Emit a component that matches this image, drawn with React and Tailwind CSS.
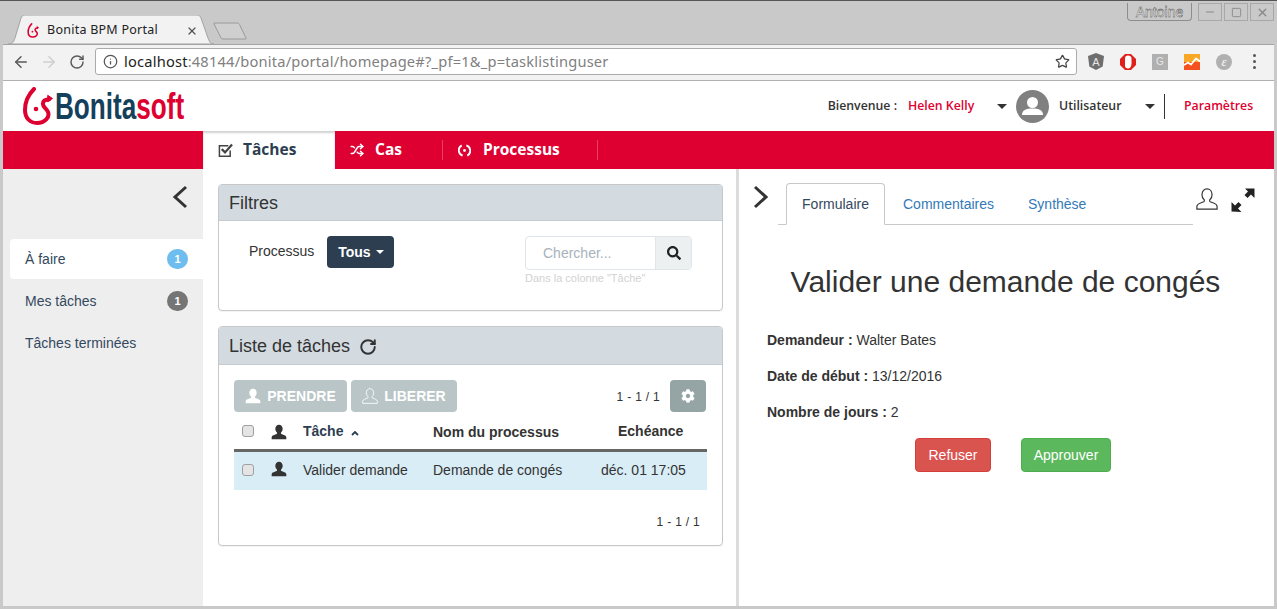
import { RotateCw, Shuffle, ArrowLeft, ArrowRight, Info, Star, X, Minus, Square } from 'lucide-react'
import { FaCog, FaSearch } from 'react-icons/fa'

const SANS = 'font-["Liberation_Sans",Arial,sans-serif]'

const PERSON = 'M12 1C8.600 1 6.500 3.800 6.500 7.300c0 2.400 1 4.400 2.400 5.500.3.300.3 1.800-.4 2.200C6 16.200 1 17 1 20v3h22v-3c0-3-5-3.800-7.500-5-.7-.4-.7-1.900-.4-2.200 1.400-1.100 2.400-3.100 2.400-5.500C17.500 3.800 15.400 1 12 1z'

function PersonIcon({ className, outline }) {
  return (
    <svg viewBox="0 0 24 24" className={className} fill={outline ? 'none' : 'currentColor'} stroke={outline ? 'currentColor' : 'none'} strokeWidth="1.300">
      <path d={PERSON} />
    </svg>
  )
}

function LogoMark({ className }) {
  return (
    <svg viewBox="7 4 31 38" className={className} fill="none" stroke="#dd0031" strokeLinecap="round">
      <path d="M19 6C13 12 10 20 10 27c0 8 5 13 12 13 8 0 13-6 11-11-1.500-4-6-5-5-9 .5-2.500 3-3.500 6-3.500" strokeWidth="4" />
      <path d="M33 12.500l4.500 3-4.500 3z" fill="#dd0031" strokeWidth="1" />
      <circle cx="21" cy="26" r="2.300" fill="#dd0031" stroke="none" />
    </svg>
  )
}

function Logo() {
  return (
    <div className="flex items-center w-[170px]">
      <LogoMark className="w-[31px] h-[38px] shrink-0" />
      <div className="ml-[2px] text-[37px] leading-none font-bold font-['Liberation_Sans',sans-serif] scale-x-[0.706] origin-left whitespace-nowrap">
        <span className="text-[#14405c]">Bonita</span>
        <span className="text-[#dd0031]">soft</span>
      </div>
    </div>
  )
}

function Titlebar() {
  return (
    <div className="h-[43px] flex shrink-0 relative">
      <div className="relative w-[206px] h-[29px] mt-[14px] ml-[8px]">
        <svg viewBox="0 0 206 29" className="absolute inset-0 w-full h-full">
          <path d="M0 29c4 0 5-1 7-6L13 3c1-2 2-3 4-3h172c2 0 3 1 4 3l7 20c2 5 3 6 6 6z" fill="#f2f2f2" stroke="#a3a3a3" />
        </svg>
        <div className="relative flex items-center h-full pl-[19px] pr-[16px] pt-[2px]">
          <LogoMark className="w-[12px] h-[15px]" />
          <span className="ml-[8px] text-[12.500px] tracking-[0.25px] text-[#222] font-['Noto_Sans',sans-serif]">Bonita BPM Portal</span>
          <X className="ml-auto w-[12px] h-[12px] text-[#555]" strokeWidth={2.500} />
        </div>
      </div>
      <svg viewBox="0 0 36 18" className="w-[36px] h-[18px] mt-[21px] -ml-[1px]">
        <path d="M1 1h23c1 0 2 .5 2.500 1.500L33 16c.3.800 0 1-1 1H10c-1 0-1.500-.3-2-1L1 2c-.3-.6 0-1 0-1z" fill="#cfcfcf" stroke="#9a9a9a" />
      </svg>
      <div className="ml-auto flex gap-[2px] pt-[2px] pr-[3px] text-[#666]">
        <div className="w-[65px] h-[18px] mr-[4px] pt-[2px] border border-t-0 border-[#8d8d8d] rounded-b-[4px] flex items-center justify-center text-[14px] text-[#eeeeee] [-webkit-text-stroke:0.35px_#333] font-['Liberation_Sans',sans-serif]">Antoine</div>
        <div className="w-[24px] h-[18px] border border-[#a8a8a8] flex items-center justify-center"><Minus className="w-[12px] h-[12px] text-[#8a8a8a]" strokeWidth={2} /></div>
        <div className="w-[24px] h-[18px] border border-[#a8a8a8] flex items-center justify-center"><Square className="w-[11px] h-[11px] text-[#8a8a8a]" strokeWidth={2} /></div>
        <div className="w-[24px] h-[18px] border border-[#a8a8a8] flex items-center justify-center"><X className="w-[13px] h-[13px] text-[#8a8a8a]" strokeWidth={2.500} /></div>
      </div>
    </div>
  )
}

function Toolbar() {
  return (
    <div className="h-[37px] shrink-0 mx-[3px] bg-[#f2f2f2] border-t border-[#a3a3a3] border-b border-b-[#b0b0b0] flex items-center pb-[2px]">
      <ArrowLeft className="ml-[9px] w-[18px] h-[18px] text-[#5a5a5a]" strokeWidth={2} />
      <ArrowRight className="ml-[10px] w-[18px] h-[18px] text-[#cfcfcf]" strokeWidth={2} />
      <RotateCw className="ml-[11px] w-[16px] h-[16px] text-[#5a5a5a]" strokeWidth={2.200} />
      <div className="ml-[10px] w-[982px] h-[27px] bg-white border border-[#ababab] rounded-[3px] flex items-center pl-[7px] pr-[6px]">
        <Info className="w-[15px] h-[15px] text-[#555]" strokeWidth={2} />
        <span className="ml-[6px] text-[14.650px] tracking-[0.2px] font-['Noto_Sans',sans-serif] text-[#222]">localhost<span className="text-[#808080]">:48144/bonita/portal/homepage#?_pf=1&amp;_p=tasklistinguser</span></span>
        <Star className="ml-auto w-[15px] h-[15px] text-[#444]" strokeWidth={2} />
      </div>
      <svg viewBox="0 0 16 17" className="ml-[11px] w-[16px] h-[17px]">
        <path d="M8 0l8 3-1.300 10.500L8 17l-6.700-3.500L0 3z" fill="#6e6e6e" />
        <text x="8" y="12.500" textAnchor="middle" fontSize="11" fill="#e8e8e8" fontFamily="Liberation Sans">A</text>
      </svg>
      <svg viewBox="0 0 16 16" className="ml-[16px] w-[16px] h-[16px]">
        <path d="M5 0h6l5 5v6l-5 5H5l-5-5V5z" fill="#e0201b" />
        <path d="M5 4.500c0-2 1-3 3-3s3.500 1 3.500 3v5c0 3-1.500 5-3.500 5s-3-1-3-3z" fill="#fff" />
      </svg>
      <div className="ml-[16px] w-[16px] h-[16px] bg-[#b0b0b0] flex items-center justify-center text-[10px] text-[#e8e8e8] font-['Liberation_Sans',sans-serif]">G</div>
      <svg viewBox="0 0 16 16" className="ml-[16px] w-[16px] h-[16px]">
        <rect width="16" height="8" fill="#f9a825" />
        <rect y="8" width="16" height="8" fill="#f4511e" />
        <path d="M0 11l4-2.500 3 2 5-6 4 3" fill="none" stroke="#fff" strokeWidth="1.800" />
      </svg>
      <div className="ml-[16px] w-[16px] h-[16px] rounded-full bg-[#b0b0b0] flex items-center justify-center text-[13px] italic text-white font-['Liberation_Serif',serif]">&#949;</div>
      <div className="ml-[21px] flex flex-col gap-[3px]">
        <span className="w-[3px] h-[3px] rounded-full bg-[#555]" />
        <span className="w-[3px] h-[3px] rounded-full bg-[#555]" />
        <span className="w-[3px] h-[3px] rounded-full bg-[#555]" />
      </div>
    </div>
  )
}

function Caret({ className }) {
  return <span className={`w-0 h-0 border-x-[5px] border-x-transparent border-t-[5px] border-t-[#333] ${className}`} />
}

function AppHeader() {
  return (
    <div className="h-[50px] shrink-0 bg-white flex items-center pl-[19px] pr-[21px] font-['Open_Sans',sans-serif] text-[12.300px] font-semibold">
      <Logo />
      <div className="ml-auto flex items-center">
        <span className="text-[#333]">Bienvenue :</span>
        <span className="ml-[11px] w-[68px] whitespace-nowrap text-[#dd0031]">Helen Kelly</span>
        <Caret className="ml-[21px]" />
        <div className="ml-[9px] w-[33px] h-[33px] rounded-full bg-[#808080] flex items-center justify-center overflow-hidden">
          <svg viewBox="0 0 33 33" className="w-[33px] h-[33px]">
            <circle cx="16.500" cy="12.500" r="5.500" fill="#fff" />
            <path d="M6 25c0-5 4-6.500 10.500-6.500S27 20 27 25z" fill="#fff" />
          </svg>
        </div>
        <span className="ml-[10px] w-[65px] whitespace-nowrap text-[#333]">Utilisateur</span>
        <Caret className="ml-[21px]" />
        <span className="ml-[9px] w-px h-[25px] bg-[#333]" />
        <span className="ml-[19px] w-[69px] whitespace-nowrap text-[#dd0031]">Paramètres</span>
      </div>
    </div>
  )
}

function NavBar() {
  return (
    <div className="h-[38px] shrink-0 bg-[#dd0031] flex pl-[200px] text-[15.500px] font-bold font-['Open_Sans',sans-serif]">
      <div className="w-[132px] bg-white shadow-[inset_0_2px_2px_rgba(0,0,0,0.18)] flex items-center pl-[15px] text-[#2c3e50]">
        <svg viewBox="0 0 16 16" className="w-[15px] h-[15px]" fill="none" stroke="#444">
          <path d="M13 8v6H1.500V3H11" strokeWidth="1.600" />
          <path d="M4 6.500l3.500 3.500L15 1.500" strokeWidth="2.400" />
        </svg>
        <span className="ml-[10px]">Tâches</span>
      </div>
      <div className="w-[107px] flex items-center pl-[15px] text-white">
        <Shuffle className="w-[14px] h-[14px]" strokeWidth={2.500} />
        <span className="ml-[11px]">Cas</span>
      </div>
      <div className="w-[155px] flex items-center pl-[15px] text-white border-l border-[#e8405f] my-[9px]">
        <svg viewBox="0 0 14 14" className="w-[13px] h-[13px]" fill="none" stroke="#fff" strokeWidth="2">
          <path d="M4 1.500a6 6 0 0 0 1 11M10 12.500a6 6 0 0 0-1-11" />
          <circle cx="7" cy="7" r="1.500" fill="#fff" stroke="none" />
        </svg>
        <span className="ml-[12px]">Processus</span>
      </div>
      <div className="w-px my-[9px] bg-[#e8405f]" />
    </div>
  )
}

function Badge({ color, children }) {
  return <span className={`ml-auto mr-[15px] w-[21px] h-[20px] rounded-full ${color} text-white text-[11px] font-bold flex items-center justify-center`}>{children}</span>
}

function Sidebar() {
  return (
    <div className={`w-[200px] shrink-0 bg-[#eeeeee] text-[14px] text-[#34495e] ${SANS}`}>
      <div className="h-[70px] flex justify-end pt-[16px] pr-[15px]">
        <svg viewBox="0 0 16 24" className="w-[16px] h-[24px]" fill="none" stroke="#333" strokeWidth="3"><path d="M14 2L3 12l11 10" /></svg>
      </div>
      <div className="ml-[7px] flex flex-col gap-[2px]">
        <div className="h-[40px] bg-white rounded-l-[4px] flex items-center pl-[15px]">À faire<Badge color="bg-[#6dbdee]">1</Badge></div>
        <div className="h-[40px] flex items-center pl-[15px]">Mes tâches<Badge color="bg-[#757575]">1</Badge></div>
        <div className="h-[40px] flex items-center pl-[15px]">Tâches terminées</div>
      </div>
    </div>
  )
}

function Panel({ title, className, headClass, children }) {
  return (
    <div className={`w-[505px] bg-white border border-[#c8c8c8] rounded-[4px] shadow-[0_1px_1px_rgba(0,0,0,0.05)] overflow-hidden ${className}`}>
      <div className={`bg-[#d3dbe1] border-b border-[#c4ccd2] flex items-center pl-[10px] pt-[2px] text-[18px] text-[#333] ${headClass}`}>{title}</div>
      {children}
    </div>
  )
}

function Filters() {
  return (
    <Panel title="Filtres" className="h-[127px]" headClass="h-[36px]">
      <div className="flex pt-[15px] pl-[30px] pr-[30px] text-[14px] text-[#333]">
        <span className="mt-[5px]">Processus</span>
        <button className="ml-[13px] w-[67px] h-[32px] bg-[#2c3e50] rounded-[4px] text-white font-bold flex items-center justify-center gap-[5px]">
          Tous<span className="w-0 h-0 border-x-[4px] border-x-transparent border-t-[4px] border-t-white" />
        </button>
        <div className="ml-auto w-[167px]">
          <div className="h-[34px] flex border border-[#dfe5ea] rounded-[4px] overflow-hidden">
            <div className="w-[130px] border-r border-[#dfe5ea] pl-[17px] flex items-center text-[#a8b2bb]">Chercher...</div>
            <div className="flex-1 bg-[#ecf0f1] flex items-center justify-center">
              <FaSearch className="w-[14px] h-[14px] text-[#222]" />
            </div>
          </div>
          <div className="text-[11px] text-[#d2d2d2] whitespace-nowrap">Dans la colonne "Tâche"</div>
        </div>
      </div>
    </Panel>
  )
}

function Checkbox() {
  return <span className="block w-[12px] h-[12px] rounded-[3px] bg-[#e4e4e4] border border-[#9f9f9f]" />
}

function TaskList() {
  return (
    <Panel
      className="h-[220px] mt-[15px]"
      headClass="h-[38px]"
      title={<>Liste de tâches<RotateCw className="ml-[9px] w-[18px] h-[18px] text-[#333]" strokeWidth={2.600} /></>}
    >
      <div className="px-[15px] text-[14px] text-[#333]">
        <div className="flex items-center pt-[15px]">
          <button className="w-[113px] h-[32px] bg-[#b9c5c6] rounded-[4px] text-white font-bold flex items-center justify-center gap-[6px]">
            <PersonIcon className="w-[16px] h-[16px]" />PRENDRE
          </button>
          <button className="ml-[4px] w-[106px] h-[32px] bg-[#b9c5c6] rounded-[4px] text-white font-bold flex items-center justify-center gap-[6px]">
            <PersonIcon outline className="w-[16px] h-[16px]" />LIBERER
          </button>
          <span className="ml-auto mt-[1px] text-[12px] tracking-[0.3px] mr-[10px]">1 - 1 / 1</span>
          <button className="w-[36px] h-[32px] mr-px bg-[#95a5a6] rounded-[4px] flex items-center justify-center">
            <FaCog className="w-[14px] h-[14px] text-white" />
          </button>
        </div>
        <div className="w-[473px] h-[40px] flex items-center border-b-[3px] border-[#666] font-bold">
          <div className="w-[35px] pl-[8px]"><Checkbox /></div>
          <div className="w-[34px] pl-[2px] mt-[2px]"><PersonIcon className="w-[16px] h-[16px] text-[#333]" /></div>
          <div className="w-[130px] mt-[2px] text-[#2c3e50] flex items-center">Tâche<svg viewBox="0 0 8 5" className="ml-[8px] mt-[3px] w-[8px] h-[5px]" fill="none" stroke="#2c3e50" strokeWidth="1.800"><path d="M1 4l3-3 3 3" /></svg></div>
          <div className="w-[174px] mt-[4px]">Nom du processus</div>
          <div className="mt-[2px] ml-[11px]">Echéance</div>
        </div>
        <div className="w-[473px] h-[38px] flex items-center bg-[#d9edf7] pb-[2px]">
          <div className="w-[35px] pl-[8px]"><Checkbox /></div>
          <div className="w-[34px] pl-[2px] -mt-[2px]"><PersonIcon className="w-[16px] h-[16px] text-[#333]" /></div>
          <div className="w-[130px]">Valider demande</div>
          <div className="w-[168px]">Demande de congés</div>
          <div>déc. 01 17:05</div>
        </div>
        <div className="mt-[23px] pr-[7px] w-[473px] text-right text-[12px] tracking-[0.3px]">1 - 1 / 1</div>
      </div>
    </Panel>
  )
}

function FormPane() {
  return (
    <div className={`flex-1 bg-white border-l-[3px] border-[#dcdcdc] ${SANS} text-[14px] text-[#333]`}>
      <div className="flex pt-[14px] h-[56px]">
        <svg viewBox="0 0 16 24" className="ml-[14px] mt-[2px] w-[16px] h-[24px]" fill="none" stroke="#333" strokeWidth="3"><path d="M2 2l11 10L2 22" /></svg>
        <div className="ml-[9px] w-[415px] h-[42px] border-b border-[#c8c8c8] flex pl-[8px]">
          <div className="w-[99px] h-[42px] bg-white border border-[#c8c8c8] border-b-white rounded-t-[4px] flex items-center justify-center text-[#34495e]">Formulaire</div>
          <div className="ml-[18px] h-[42px] flex items-center text-[#337ab7]">Commentaires</div>
          <div className="ml-[34px] h-[42px] flex items-center text-[#337ab7]">Synthèse</div>
        </div>
        <PersonIcon outline className="ml-[3px] mt-[5px] w-[22px] h-[22px] text-[#333]" />
        <svg viewBox="0 0 24 24" className="ml-[13px] mt-[5px] w-[24px] h-[24px]" fill="#222">
          <path d="M23.500 .5v9.500l-3.500-3.500-3.500 3.500-3-3 3.500-3.500L14 .5zM.5 23.500V14l3.500 3.500 3.500-3.500 3 3-3.500 3.500 3.500 3.500z" />
        </svg>
      </div>
      <h1 className="mt-[40px] text-center text-[30px] leading-[33px] font-normal pr-[2px]">Valider une demande de congés</h1>
      <div className="mt-[32px] pl-[28px] flex flex-col gap-[16px] leading-[20px]">
        <p><b>Demandeur :</b> Walter Bates</p>
        <p><b>Date de début :</b> 13/12/2016</p>
        <p><b>Nombre de jours :</b> 2</p>
      </div>
      <div className="mt-[16px] flex pl-[176px]">
        <button className="w-[76px] h-[34px] bg-[#d9534f] border border-[#d43f3a] rounded-[4px] text-white">Refuser</button>
        <button className="ml-[30px] w-[90px] h-[34px] bg-[#5cb85c] border border-[#4cae4c] rounded-[4px] text-white">Approuver</button>
      </div>
    </div>
  )
}

export default function App() {
  return (
    <div className="w-[1277px] h-[609px] bg-[#c9c9c9] border-t border-[#555] overflow-hidden flex flex-col">
      <Titlebar />
      <Toolbar />
      <div className="mx-[3px] h-[525px] flex flex-col overflow-hidden">
        <AppHeader />
        <NavBar />
        <div className="flex-1 flex min-h-0">
          <Sidebar />
          <div className={`w-[533px] shrink-0 bg-white pl-[15px] pt-[15px] ${SANS}`}>
            <Filters />
            <TaskList />
          </div>
          <FormPane />
        </div>
      </div>
    </div>
  )
}
